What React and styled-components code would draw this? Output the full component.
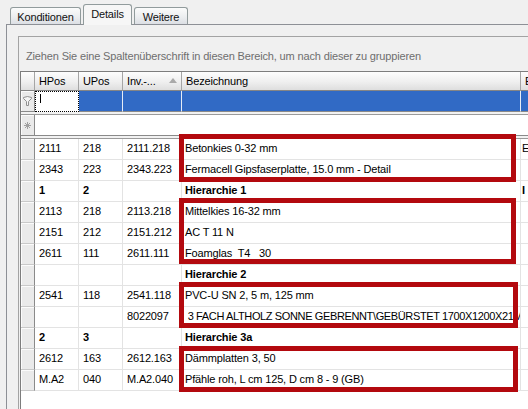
import React from 'react';
import styled, { createGlobalStyle, css } from 'styled-components';

const GlobalStyle = createGlobalStyle`
  html, body { margin: 0; padding: 0; background: #f0f0f0; }
  body { font-family: "Liberation Sans", Arial, sans-serif; font-size: 11px; color: #000; }
  * { box-sizing: border-box; }
`;

const COLS = '14px 44px 44px 59px 339px 80px';

const Root = styled.div`
  width: 528px;
  height: 409px;
  overflow: hidden;
  display: flex;
  flex-direction: column;
  background: #f0f0f0;
  letter-spacing: -0.15px;
`;

const TabStrip = styled.div`
  height: 24px;
  display: flex;
  align-items: flex-end;
  padding-left: 10px;
  gap: 2px;
  position: relative;
  z-index: 1;
`;

const Tab = styled.div`
  width: ${(p) => p.$w}px;
  height: 17px;
  border: 1px solid #919b9c;
  border-bottom: none;
  border-radius: 3px 3px 0 0;
  background: linear-gradient(#fbfbfb, #eceef0 55%, #dcdfe4);
  display: flex;
  align-items: center;
  justify-content: center;
  color: #111;
  padding-top: 1px;
  ${(p) =>
    p.$active &&
    css`
      height: 21px;
      margin-bottom: -1px;
      background: #f6f6f6;
      padding-top: 0;
      padding-bottom: 2px;
    `}
`;

const TabPage = styled.div`
  flex: 1;
  margin-left: 6px;
  border-top: 1px solid #8d9096;
  border-left: 1px solid #8d9096;
  padding: 11px 0 0 11px;
  display: flex;
  flex-direction: column;
  min-height: 0;
`;

const GroupBox = styled.div`
  flex: 1;
  border-top: 1px solid #a3a3a3;
  border-left: 1px solid #a3a3a3;
  padding-left: 1px;
  display: flex;
  flex-direction: column;
  min-height: 0;
`;

const GroupByPanel = styled.div`
  height: 34px;
  padding: 3px 0 0 6px;
  display: flex;
  align-items: center;
  color: #6e6e6e;
  white-space: nowrap;
`;

const Grid = styled.div`
  flex: 1;
  width: 600px;
  border-top: 1px solid #7d7d7d;
  border-left: 1px solid #7d7d7d;
  background: #fff;
  display: flex;
  flex-direction: column;
  min-height: 0;
`;

const Row = styled.div`
  display: grid;
  grid-template-columns: ${COLS};
  height: ${(p) => p.$h || 21}px;
`;

const HeaderCell = styled.div`
  background: linear-gradient(#fdfdfd, #efefef 55%, #dedede);
  border-right: 1px solid #a5a5a5;
  border-bottom: 1px solid #858585;
  padding: 0 4px 1px 4px;
  display: flex;
  align-items: center;
  justify-content: space-between;
  white-space: nowrap;
  overflow: hidden;
`;

const SortArrow = styled.span`
  width: 0;
  height: 0;
  border-left: 4.5px solid transparent;
  border-right: 4.5px solid transparent;
  border-bottom: 5px solid #a9a9a9;
  margin-top: -1px;
`;

const Indicator = styled.div`
  background: #eaeaea;
  box-shadow: inset 1px 1px 0 #fbfbfb;
  border-right: 1px solid #8a8a8a;
  border-bottom: 1px solid ${(p) => (p.$dark ? '#8a8a8a' : '#c9c9c9')};
  display: flex;
  align-items: center;
  justify-content: center;
`;

const FilterCell = styled.div`
  background: ${(p) => (p.$edit ? '#fff' : '#316ac5')};
  border-right: 1px solid ${(p) => (p.$edit ? '#fff' : '#e6ecf6')};
  border-bottom: 1px solid #8a8a8a;
  ${(p) =>
    p.$edit &&
    css`
      border: 1px dotted #000;
      border-bottom: 1px dotted #000;
      padding: 2px 0 0 4px;
    `}
`;

const Caret = styled.div`
  width: 1px;
  height: 9px;
  background: #000;
`;

const NewRowFill = styled.div`
  grid-column: 2 / -1;
  border-bottom: 1px solid #8a8a8a;
  background: #fff;
`;

const Spacer = styled.div`
  height: ${(p) => p.$h}px;
  background: #f2f2f2;
  border-bottom: 1px solid #9a9a9a;
`;

const Body = styled.div`
  position: relative;
  flex: 1;
  background: #fff;
`;

const Cell = styled.div`
  border-right: 1px solid #e3e3e3;
  border-bottom: 1px solid #e3e3e3;
  padding: 0 0 3px ${(p) => p.$pl ?? 4}px;
  display: flex;
  align-items: center;
  white-space: pre;
  overflow: hidden;
  font-weight: ${(p) => (p.$bold ? 700 : 400)};
  letter-spacing: ${(p) => (p.$tight ? '-0.37px' : 'inherit')};
`;

const Mark = styled.div`
  position: absolute;
  border: 5px solid #b3090e;
  pointer-events: none;
`;

const FilterIcon = () => (
  <svg width="9" height="11" viewBox="0 0 9 11">
    <path d="M0.5 1.5 Q4.5 -0.5 8.5 1.5 L8.5 2.5 L5.5 5.5 L5.5 9.5 L3.5 9.5 L3.5 5.5 L0.5 2.5 Z" fill="#f4f4f4" stroke="#8f8f8f" strokeWidth="1" />
  </svg>
);

const StarIcon = () => (
  <svg width="7" height="7" viewBox="0 0 7 7" stroke="#a0a0a0" strokeWidth="1">
    <line x1="3.5" y1="0" x2="3.5" y2="7" />
    <line x1="0" y1="3.5" x2="7" y2="3.5" />
    <line x1="1" y1="1" x2="6" y2="6" />
    <line x1="6" y1="1" x2="1" y2="6" />
  </svg>
);

const rows = [
  { c: ['2111', '218', '2111.218', 'Betonkies 0-32 mm', 'E'] },
  { c: ['2343', '223', '2343.223', 'Fermacell Gipsfaserplatte, 15.0 mm - Detail', ''] },
  { c: ['1', '2', '', 'Hierarchie 1', 'I'], bold: true },
  { c: ['2113', '218', '2113.218', 'Mittelkies 16-32 mm', ''] },
  { c: ['2151', '212', '2151.212', 'AC T 11 N', ''] },
  { c: ['2611', '111', '2611.111', 'Foamglas  T4   30', ''] },
  { c: ['', '', '', 'Hierarchie 2', ''], bold: true },
  { c: ['2541', '118', '2541.118', 'PVC-U SN 2, 5 m, 125 mm', ''] },
  { c: ['', '', '8022097', ' 3 FACH ALTHOLZ SONNE GEBRENNT\\GEBÜRSTET 1700X1200X21MM', ''], tight: true },
  { c: ['2', '3', '', 'Hierarchie 3a', ''], bold: true },
  { c: ['2612', '163', '2612.163', 'Dämmplatten 3, 50', ''] },
  { c: ['M.A2', '040', 'M.A2.040', 'Pfähle roh, L cm 125, D cm 8 - 9 (GB)', ''] },
];

const marks = [
  { top: -5, height: 48, width: 337 },
  { top: 59, height: 66, width: 337 },
  { top: 143, height: 46, width: 339 },
  { top: 207, height: 46, width: 339 },
];

export default function App() {
  return (
    <>
      <GlobalStyle />
      <Root>
        <TabStrip>
          <Tab $w={71}>Konditionen</Tab>
          <Tab $w={49} $active>Details</Tab>
          <Tab $w={54}>Weitere</Tab>
        </TabStrip>
        <TabPage>
          <GroupBox>
            <GroupByPanel>
              Ziehen Sie eine Spaltenüberschrift in diesen Bereich, um nach dieser zu gruppieren
            </GroupByPanel>
            <Grid>
              <Row $h={19}>
                <HeaderCell />
                <HeaderCell>HPos</HeaderCell>
                <HeaderCell>UPos</HeaderCell>
                <HeaderCell>
                  <span>Inv.-...</span>
                  <SortArrow />
                </HeaderCell>
                <HeaderCell>Bezeichnung</HeaderCell>
                <HeaderCell>Einheit</HeaderCell>
              </Row>
              <Row $h={21}>
                <Indicator $dark>
                  <FilterIcon />
                </Indicator>
                <FilterCell $edit>
                  <Caret />
                </FilterCell>
                <FilterCell />
                <FilterCell />
                <FilterCell />
                <FilterCell />
              </Row>
              <Spacer $h={3} />
              <Row $h={21}>
                <Indicator $dark>
                  <StarIcon />
                </Indicator>
                <NewRowFill />
              </Row>
              <Spacer $h={3} />
              <Body>
                {rows.map((r, i) => (
                  <Row key={i} $h={21}>
                    <Indicator />
                    <Cell $bold={r.bold}>{r.c[0]}</Cell>
                    <Cell $bold={r.bold}>{r.c[1]}</Cell>
                    <Cell>{r.c[2]}</Cell>
                    <Cell $bold={r.bold} $tight={r.tight} $pl={3}>{r.c[3]}</Cell>
                    <Cell $bold={r.bold} $pl={1}>{r.c[4]}</Cell>
                  </Row>
                ))}
                {marks.map((m, i) => (
                  <Mark key={i} style={{ left: 158, top: m.top, width: m.width, height: m.height }} />
                ))}
              </Body>
            </Grid>
          </GroupBox>
        </TabPage>
      </Root>
    </>
  );
}
